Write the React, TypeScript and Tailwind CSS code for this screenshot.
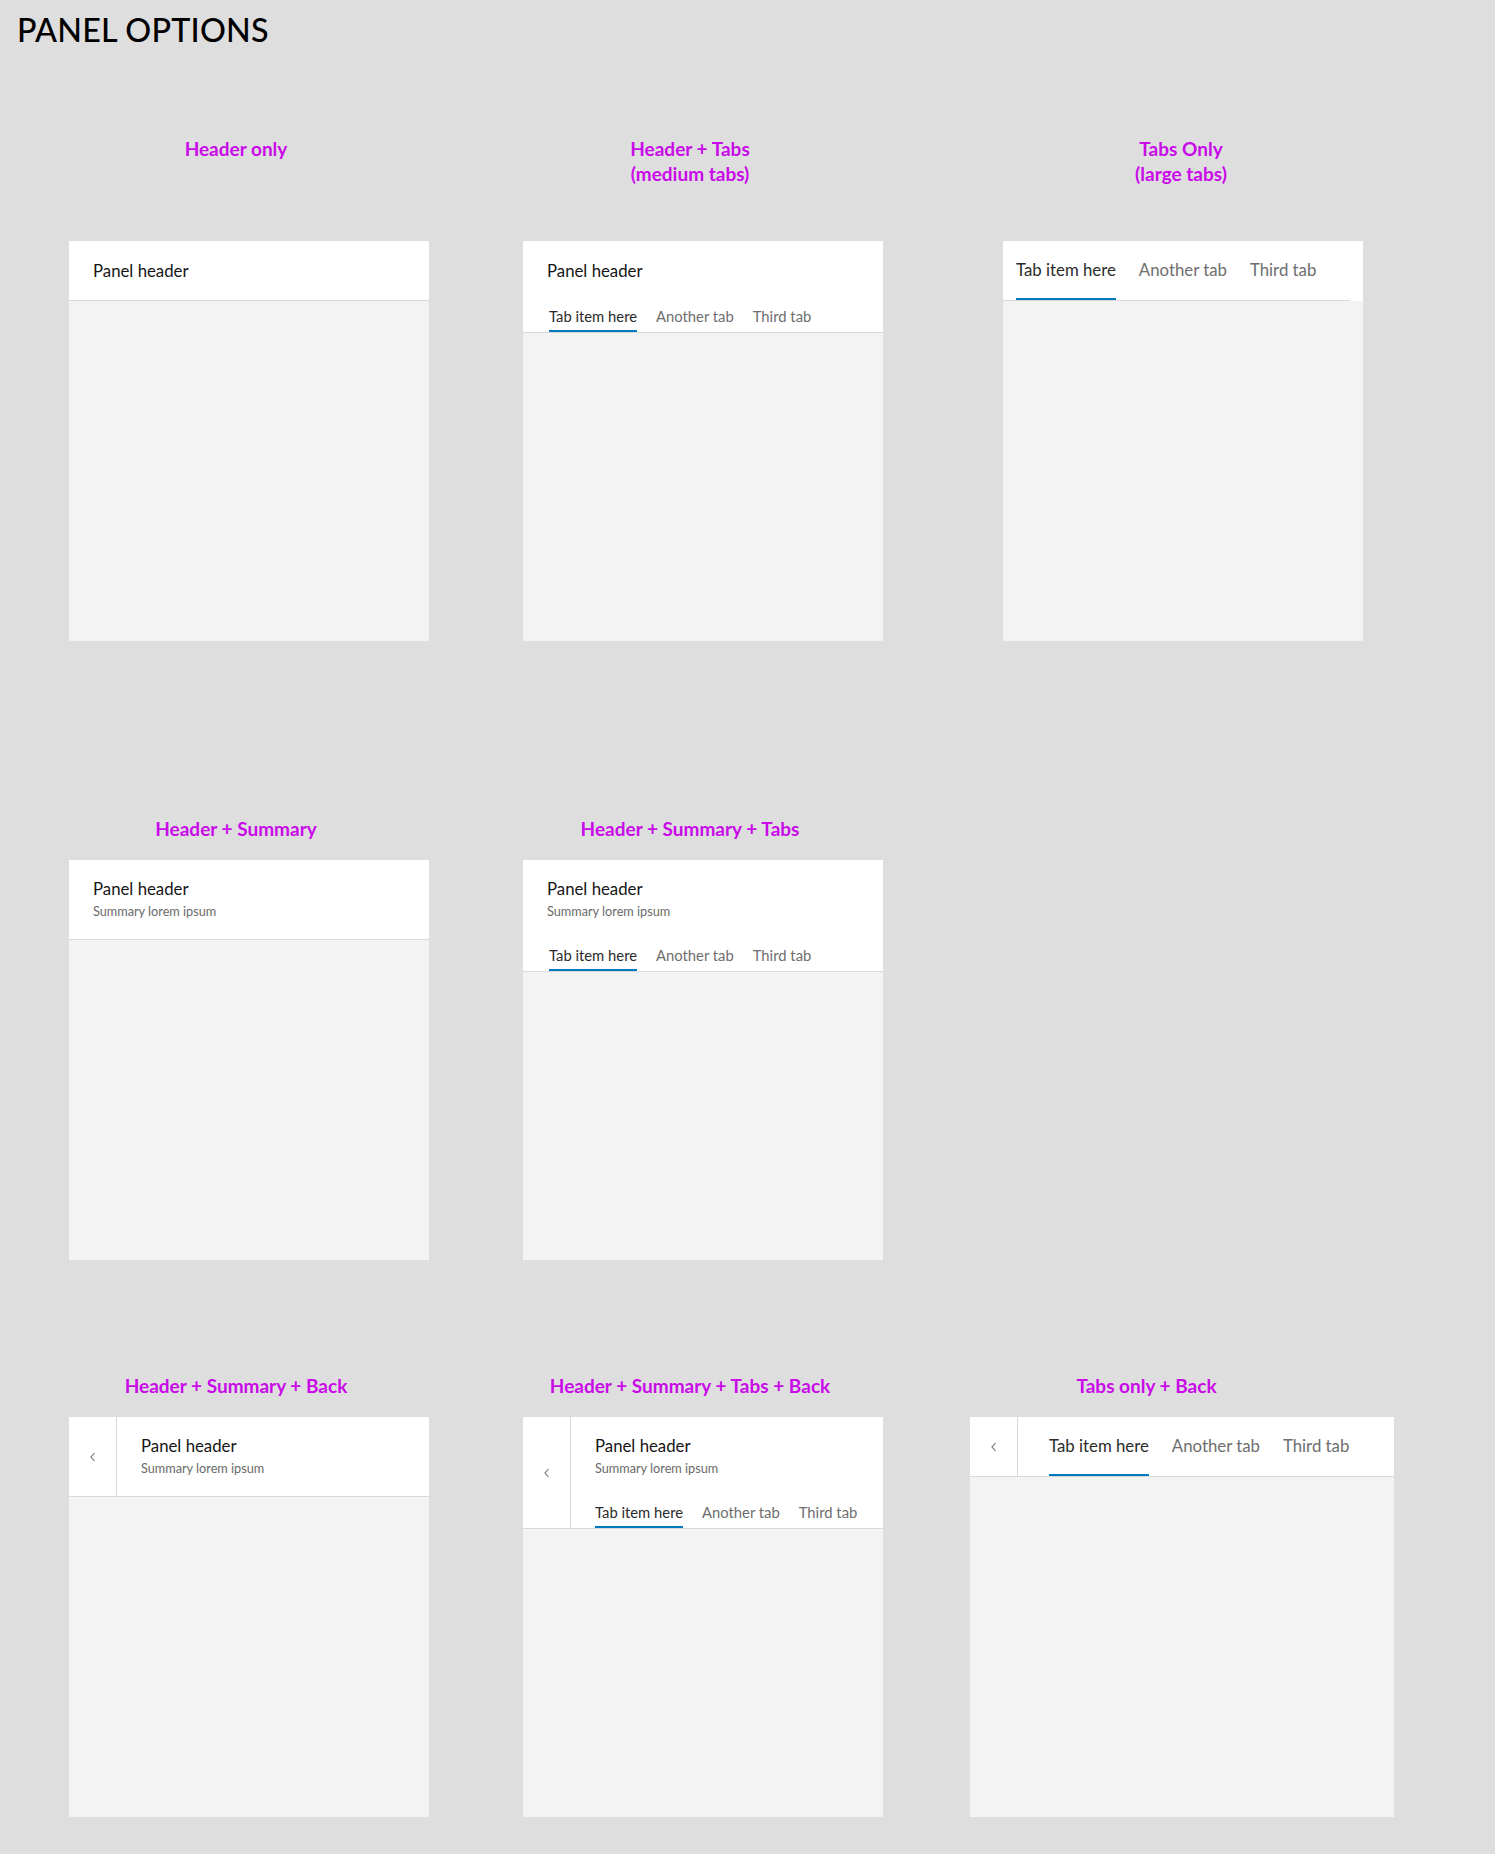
import React from "react";

const Chevron = () => (
  <svg width="10" height="12" viewBox="0 0 10 12" aria-hidden="true">
    <polyline points="6.5,2 3,6 6.5,10" fill="none" stroke="#6e6e6e" strokeWidth="1.1" />
  </svg>
);

type TabProps = { label: string; active?: boolean };

const MediumTab = ({ label, active }: TabProps) => (
  <div
    className={
      active
        ? "pb-[4px] border-b-2 border-[#0079c1] text-[14.8px] leading-[20px] text-[#2b2b2b]"
        : "pb-[4px] border-b-2 border-transparent text-[14.8px] leading-[20px] text-[#6e6e6e]"
    }
  >
    {label}
  </div>
);

const LargeTab = ({ label, active }: TabProps) => (
  <div
    className={
      active
        ? "pt-[19px] pb-[18px] border-b-2 border-[#0079c1] text-[16.8px] leading-[20px] text-[#2b2b2b]"
        : "pt-[19px] pb-[18px] border-b-2 border-transparent text-[16.8px] leading-[20px] text-[#6e6e6e]"
    }
  >
    {label}
  </div>
);

const MediumTabs = ({ className }: { className: string }) => (
  <div className={className}>
    <MediumTab label="Tab item here" active />
    <MediumTab label="Another tab" />
    <MediumTab label="Third tab" />
  </div>
);

const LargeTabs = ({ className }: { className: string }) => (
  <div className={className}>
    <LargeTab label="Tab item here" active />
    <LargeTab label="Another tab" />
    <LargeTab label="Third tab" />
  </div>
);

const Title = () => (
  <div className="text-[16.8px] leading-[20px] text-[#151515]">Panel header</div>
);

const Summary = () => (
  <div className="mt-[4px] text-[12.7px] leading-[16px] text-[#6a6a6a]">Summary lorem ipsum</div>
);

const Body = () => <div className="flex-1 bg-[#f3f3f3]" />;

const Label = ({ children, className }: { children: React.ReactNode; className: string }) => (
  <div className={className}>{children}</div>
);

const labelText = "text-center text-[19px] leading-[25px] font-bold text-[#c90ae9]";

export default function App() {
  return (
    <div className="min-h-[1854px] w-full bg-[#dedede] font-['Lato','Noto_Sans',sans-serif]">
      <h1 className="pl-[17px] pt-[10px] text-[32.3px] leading-[40px] font-medium text-black tracking-[0.2px]">
        PANEL OPTIONS
      </h1>

      {/* Row 1 */}
      <div className="mt-[86px] flex pl-[69px]">
        <div className="flex w-[360px] flex-col">
          <Label className={`h-[105px] w-[334px] ${labelText}`}>Header only</Label>
          <div className="flex h-[400px] flex-col bg-white">
            <div className="h-[60px] border-b border-[#d9d9d9] pl-[24px] pt-[20px]">
              <Title />
            </div>
            <Body />
          </div>
        </div>

        <div className="ml-[94px] flex w-[360px] flex-col">
          <Label className={`h-[105px] w-[334px] ${labelText}`}>
            Header + Tabs
            <br />
            (medium tabs)
          </Label>
          <div className="flex h-[400px] flex-col bg-white">
            <div className="border-b border-[#d9d9d9] pt-[20px]">
              <div className="pl-[24px]">
                <Title />
              </div>
              <MediumTabs className="mt-[25px] flex gap-[19px] pl-[26px]" />
            </div>
            <Body />
          </div>
        </div>

        <div className="ml-[120px] flex w-[360px] flex-col">
          <Label className={`h-[105px] w-[356px] ${labelText}`}>
            Tabs Only
            <br />
            (large tabs)
          </Label>
          <div className="flex h-[400px] flex-col bg-white">
            <div className="mr-[13px] border-b border-[#d9d9d9]">
              <LargeTabs className="flex gap-[23px] pl-[13px]" />
            </div>
            <Body />
          </div>
        </div>
      </div>

      {/* Row 2 */}
      <div className="mt-[175px] flex pl-[69px]">
        <div className="flex w-[360px] flex-col">
          <Label className={`h-[44px] w-[334px] ${labelText}`}>Header + Summary</Label>
          <div className="flex h-[400px] flex-col bg-white">
            <div className="border-b border-[#d9d9d9] pb-[20px] pl-[24px] pt-[19px]">
              <Title />
              <Summary />
            </div>
            <Body />
          </div>
        </div>

        <div className="ml-[94px] flex w-[360px] flex-col">
          <Label className={`h-[44px] w-[334px] ${labelText}`}>Header + Summary + Tabs</Label>
          <div className="flex h-[400px] flex-col bg-white">
            <div className="border-b border-[#d9d9d9] pt-[19px]">
              <div className="pl-[24px]">
                <Title />
                <Summary />
              </div>
              <MediumTabs className="mt-[26px] flex gap-[19px] pl-[26px]" />
            </div>
            <Body />
          </div>
        </div>
      </div>

      {/* Row 3 */}
      <div className="mt-[113px] flex pl-[69px]">
        <div className="flex w-[360px] flex-col">
          <Label className={`h-[44px] w-[334px] ${labelText}`}>Header + Summary + Back</Label>
          <div className="flex h-[400px] flex-col bg-white">
            <div className="flex border-b border-[#d9d9d9]">
              <div className="flex w-[48px] items-center justify-center border-r border-[#d9d9d9]">
                <Chevron />
              </div>
              <div className="pb-[20px] pl-[24px] pt-[19px]">
                <Title />
                <Summary />
              </div>
            </div>
            <Body />
          </div>
        </div>

        <div className="ml-[94px] flex w-[360px] flex-col">
          <Label className={`h-[44px] w-[334px] ${labelText}`}>Header + Summary + Tabs + Back</Label>
          <div className="flex h-[400px] flex-col bg-white">
            <div className="flex border-b border-[#d9d9d9]">
              <div className="flex w-[48px] items-center justify-center border-r border-[#d9d9d9]">
                <Chevron />
              </div>
              <div className="pl-[24px] pt-[19px]">
                <Title />
                <Summary />
                <MediumTabs className="mt-[26px] flex gap-[19px]" />
              </div>
            </div>
            <Body />
          </div>
        </div>

        <div className="ml-[87px] flex w-[424px] flex-col">
          <Label className={`h-[44px] w-[353px] ${labelText}`}>Tabs only + Back</Label>
          <div className="flex h-[400px] flex-col bg-white">
            <div className="flex border-b border-[#d9d9d9]">
              <div className="flex w-[48px] items-center justify-center border-r border-[#d9d9d9]">
                <Chevron />
              </div>
              <LargeTabs className="flex gap-[23px] pl-[31px]" />
            </div>
            <Body />
          </div>
        </div>
      </div>
    </div>
  );
}
